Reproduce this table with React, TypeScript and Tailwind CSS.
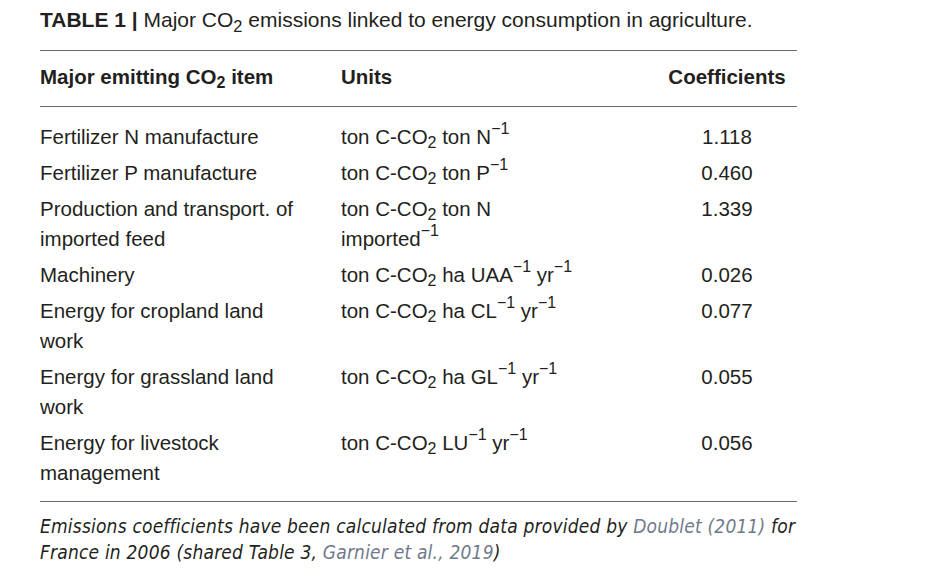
import React from "react"

/* ─── Data ───────────────────────────────────────────────────────────────── */

const CO2 = () => (
  <>
    CO<sub className="bottom-[-0.28em] text-[78%]">2</sub>
  </>
)

const Inv = () => <sup className="top-[-0.6em] text-[78%]">−1</sup>

type Row = { item: React.ReactNode; unit: React.ReactNode; coef: string }

const rows: Row[] = [
  {
    item: "Fertilizer N manufacture",
    unit: (
      <>
        ton C-<CO2 /> ton N<Inv />
      </>
    ),
    coef: "1.118",
  },
  {
    item: "Fertilizer P manufacture",
    unit: (
      <>
        ton C-<CO2 /> ton P<Inv />
      </>
    ),
    coef: "0.460",
  },
  {
    item: (
      <>
        Production and transport. of
        <br />
        imported feed
      </>
    ),
    unit: (
      <>
        ton C-<CO2 /> ton N
        <br />
        imported<Inv />
      </>
    ),
    coef: "1.339",
  },
  {
    item: "Machinery",
    unit: (
      <>
        ton C-<CO2 /> ha UAA<Inv /> yr<Inv />
      </>
    ),
    coef: "0.026",
  },
  {
    item: (
      <>
        Energy for cropland land
        <br />
        work
      </>
    ),
    unit: (
      <>
        ton C-<CO2 /> ha CL<Inv /> yr<Inv />
      </>
    ),
    coef: "0.077",
  },
  {
    item: (
      <>
        Energy for grassland land
        <br />
        work
      </>
    ),
    unit: (
      <>
        ton C-<CO2 /> ha GL<Inv /> yr<Inv />
      </>
    ),
    coef: "0.055",
  },
  {
    item: (
      <>
        Energy for livestock
        <br />
        management
      </>
    ),
    unit: (
      <>
        ton C-<CO2 /> LU<Inv /> yr<Inv />
      </>
    ),
    coef: "0.056",
  },
]

/* ─── Component ──────────────────────────────────────────────────────────── */

export default function App() {
  return (
    <div className="min-h-screen bg-white pl-[40px] pt-[6px] text-[#231f20] font-['Liberation_Sans',Arial,sans-serif]">
      {/* Caption */}
      <p className="text-[21px] leading-[28px]">
        <span className="font-bold">TABLE 1 |</span> Major <CO2 /> emissions linked to energy consumption in agriculture.
      </p>

      <div className="mt-[16px] w-[757px] border-t border-[#6b6b6b]">
        {/* Header */}
        <div className="grid grid-cols-[301px_316px_140px] border-b border-[#6b6b6b] pb-[14px] pt-[11px] text-[20.5px] font-bold leading-[30px]">
          <div>
            Major emitting <CO2 /> item
          </div>
          <div>Units</div>
          <div className="text-center">Coefficients</div>
        </div>

        {/* Body */}
        <div className="border-b border-[#6b6b6b] pb-[10px] pt-[12px] text-[20.5px] leading-[30px]">
          {rows.map((r, i) => (
            <div key={i} className="grid grid-cols-[301px_316px_140px] py-[3px]">
              <div>{r.item}</div>
              <div>{r.unit}</div>
              <div className="text-center">{r.coef}</div>
            </div>
          ))}
        </div>

        {/* Footnote */}
        <p className="pt-[11px] text-[19px] italic leading-[26px] tracking-[0.2px] font-['DejaVu_Sans_Condensed',sans-serif]">
          Emissions coefficients have been calculated from data provided by{" "}
          <span className="text-[#6f7a8a]">Doublet (2011)</span> for
          <br />
          France in 2006 (shared Table 3, <span className="text-[#6f7a8a]">Garnier et al., 2019</span>)
        </p>
      </div>
    </div>
  )
}
